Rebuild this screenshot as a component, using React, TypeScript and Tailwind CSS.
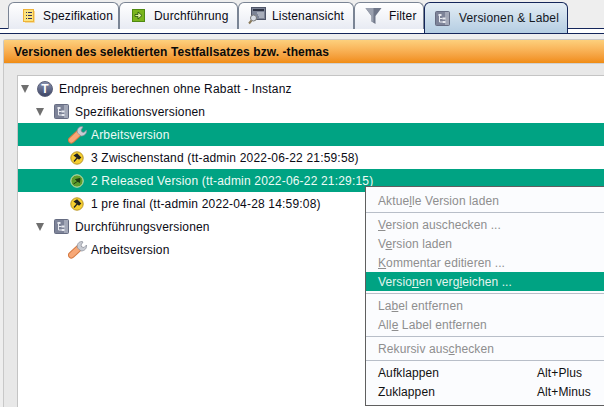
import React from "react";

const SpecIcon = () => (
  <svg width="14" height="14" viewBox="0 0 14 14">
    <rect x="1.500" y="0.500" width="10" height="12" fill="#fce47e" stroke="#eeb238" />
    <path d="M12.500 2v11.500H3" stroke="#f3d9a0" fill="none" />
    <path d="M4 3.500h1M6 3.500h4M4 6.500h1M6 6.500h4M4 9.500h1M6 9.500h4" stroke="#34345e" />
  </svg>
);

const ExecIcon = () => (
  <svg width="14" height="14" viewBox="0 0 14 14">
    <rect x="0.500" y="0.500" width="12" height="12" fill="#7ab51d" stroke="#4f8a10" />
    <path d="M3 5.500h3V3l4 3.500-4 3.500V7.500H3z" fill="#dff0a0" stroke="#23520a" strokeWidth="0.8" />
  </svg>
);

const ListIcon = () => (
  <svg width="18" height="18" viewBox="0 0 18 18">
    <rect x="3.500" y="0.500" width="14" height="12" fill="#7d8496" stroke="#4f5568" />
    <path d="M5 3h11" stroke="#2f3445" strokeWidth="2" />
    <path d="M9 6h7M10 8h6M11 10h5" stroke="#d5d8e0" />
    <circle cx="5.500" cy="11" r="3" fill="#d8dde6" stroke="#777" />
    <path d="M3.500 13.500L1 16.500" stroke="#8a7a5a" strokeWidth="2" />
  </svg>
);

const FilterIcon = () => (
  <svg width="18" height="18" viewBox="0 0 18 18">
    <path d="M0.500 1h16L10.500 9v8l-4-2.500V9z" fill="#6f7688" />
    <path d="M0.500 1h8v14L6.500 14.500V9z" fill="#9aa0ae" />
  </svg>
);

const TreeBoxIcon = () => (
  <svg width="15" height="15" viewBox="0 0 15 15">
    <rect x="0.500" y="0.500" width="14" height="14" rx="1" fill="#7d8398" stroke="#666c82" />
    <rect x="10" y="1" width="4" height="13" fill="#a3a8b8" />
    <path d="M3.500 3h3v2h-3zM7.500 6.500h3v2h-3zM7.500 10h3v2h-3z" fill="#e8eaf0" />
    <path d="M4.500 5v6h3M4.500 7.500h3" stroke="#e8eaf0" fill="none" />
  </svg>
);

const WrenchIcon = () => (
  <svg width="20" height="19" viewBox="0 0 20 19">
    <path d="M3.500 15L10.500 8.500" stroke="#d57a42" strokeWidth="7" strokeLinecap="round" />
    <path d="M3.500 15L10.500 8.500" stroke="#f7a877" strokeWidth="5" strokeLinecap="round" />
    <path d="M9.500 8C8.500 4.500 10.500 1.500 14 1.500l1 .5-2 3 .8 2 2.200.5 2.500-2.500c.5 3.500-2 6-5.500 6z" fill="#c9ccd3" stroke="#868b96" strokeWidth="0.7" />
  </svg>
);

const VersionIcon = ({ released }: { released?: boolean }) => (
  <svg width="14" height="14" viewBox="0 0 14 14">
    <circle cx="7" cy="7" r="6.200" fill={released ? "#5d9c2c" : "#f6cf30"} stroke={released ? "#cfe6b8" : "#b8962a"} />
    {released ? (
      <path d="M3.500 10L8 7M5.500 5.500L10 4.500 9.500 8.500z" fill="#1c3a10" stroke="#1c3a10" />
    ) : (
      <path d="M4 10.500L7.500 6.500M4.500 4.500L7 3l3.500 3.500L9 8z" fill="#222" stroke="#222" strokeWidth="1.200" />
    )}
  </svg>
);

const TopicIcon = () => (
  <div className="w-[16px] h-[16px] rounded-full bg-gradient-to-b from-[#8890ae] to-[#3e4666] border border-[#5a6078] flex items-center justify-center text-white text-[12px] font-bold">
    T
  </div>
);

const Caret = () => (
  <span className="w-0 h-0 border-l-[4px] border-r-[4px] border-t-[8px] border-l-transparent border-r-transparent border-t-[#6f6f6f]" />
);

const tabs = [
  { label: "Spezifikation", icon: <SpecIcon />, w: "w-[111px]", gap: "pl-[13px] gap-[7px]" },
  { label: "Durchführung", icon: <ExecIcon />, w: "w-[119px]", gap: "pl-[12px] gap-[8px]" },
  { label: "Listenansicht", icon: <ListIcon />, w: "w-[116px]", gap: "pl-[9px] gap-[6px]" },
  { label: "Filter", icon: <FilterIcon />, w: "w-[70px]", gap: "pl-[10px] gap-[6px]" },
];

const Row = ({
  indent,
  selected,
  children,
}: {
  indent: string;
  selected?: boolean;
  children: React.ReactNode;
}) => (
  <div
    className={`h-[23px] flex items-center tracking-[0.18px] ${indent} ${
      selected ? "bg-[#00a383] text-[#eefbf6]" : "text-[#0a0a14]"
    }`}
  >
    {children}
  </div>
);

const MenuRow = ({
  label,
  right,
  active,
  enabled,
}: {
  label: React.ReactNode;
  right?: string;
  active?: boolean;
  enabled?: boolean;
}) => (
  <div
    className={`h-[19px] flex items-center justify-between pl-[12px] pr-[6px] tracking-[0.1px] ${
      active ? "bg-[#00a383] text-[#e4f5ef]" : enabled ? "text-[#111]" : "text-[#8e8e8e]"
    }`}
  >
    <span>{label}</span>
    {right && <span className="w-[61px]">{right}</span>}
  </div>
);

const Sep = () => <div className="h-[5px] flex items-center"><div className="h-px w-full bg-[#b8bec8]" /></div>;

export default function App() {
  return (
    <div className="relative w-[604px] h-[407px] overflow-hidden bg-[#eeeeee] font-['Liberation_Sans',sans-serif] text-[12px]">
      {/* tabs */}
      <div className="h-[29px] pt-[2px] pl-[8px] flex border-b border-[#14265a] tracking-[0.15px]">
        {tabs.map((t) => (
          <div
            key={t.label}
            className={`${t.w} ${t.gap} h-[27px] flex items-center rounded-t-[6px] border border-b-0 border-[#7a8494] bg-gradient-to-b from-white to-[#e8ebf3] text-[#0a0a14]`}
          >
            {t.icon}
            <span>{t.label}</span>
          </div>
        ))}
        <div className="w-[144px] h-[31px] pl-[10px] gap-[9px] flex items-center rounded-t-[6px] border border-b-0 border-[#14265a] bg-gradient-to-b from-[#e4edf5] to-[#b4cde2] text-[#14181f] relative z-10">
          <TreeBoxIcon />
          <span>Versionen &amp; Label</span>
        </div>
      </div>
      <div className="h-[4px] bg-white" />
      <div className="h-px bg-[#14265a]" />

      {/* panel */}
      <div className="mt-[5px] ml-[3px] h-[370px] bg-[#e8e8e8] border-t border-l border-[#c8c8c8] rounded-tl-[3px] flex flex-col">
        <div className="h-[24px] shrink-0 pl-[10px] flex items-center font-bold tracking-[0.08px] text-[#0a0a0a] bg-gradient-to-b from-[#fdd07c] to-[#f08c10] border-b border-[#d0d0d0]">
          Versionen des selektierten Testfallsatzes bzw. -themas
        </div>
        <div className="flex-1 pt-[11px] pl-[13px]">
          <div className="h-full bg-white border-t border-l border-[#c4c4c4] pt-px">
            <Row indent="pl-[3px]">
              <Caret />
              <span className="ml-[8px]"><TopicIcon /></span>
              <span className="ml-[6px]">Endpreis berechnen ohne Rabatt - Instanz</span>
            </Row>
            <Row indent="pl-[18px]">
              <Caret />
              <span className="ml-[10px]"><TreeBoxIcon /></span>
              <span className="ml-[6px]">Spezifikationsversionen</span>
            </Row>
            <Row indent="pl-[50px]" selected>
              <WrenchIcon />
              <span className="ml-[3px]">Arbeitsversion</span>
            </Row>
            <Row indent="pl-[52px]">
              <VersionIcon />
              <span className="ml-[7px]">3 Zwischenstand (tt-admin 2022-06-22 21:59:58)</span>
            </Row>
            <Row indent="pl-[52px]" selected>
              <VersionIcon released />
              <span className="ml-[7px]">2 Released Version (tt-admin 2022-06-22 21:29:15)</span>
            </Row>
            <Row indent="pl-[52px]">
              <VersionIcon />
              <span className="ml-[7px]">1 pre final (tt-admin 2022-04-28 14:59:08)</span>
            </Row>
            <Row indent="pl-[18px]">
              <Caret />
              <span className="ml-[10px]"><TreeBoxIcon /></span>
              <span className="ml-[6px]">Durchführungsversionen</span>
            </Row>
            <Row indent="pl-[50px]">
              <WrenchIcon />
              <span className="ml-[3px]">Arbeitsversion</span>
            </Row>
          </div>
        </div>
      </div>

      {/* context menu */}
      <div className="absolute left-[365px] top-[186px] w-[239px] h-[220px] bg-[#fbfcfe] border-t border-l border-b border-[#5f5f5f] py-[4px]">
        <MenuRow label={<>Aktue<u>l</u>le Version laden</>} />
        <Sep />
        <MenuRow label={<><u>V</u>ersion auschecken ...</>} />
        <MenuRow label={<>V<u>e</u>rsion laden</>} />
        <MenuRow label={<><u>K</u>ommentar editieren ...</>} />
        <MenuRow active label={<>Versio<u>n</u>en verg<u>l</u>eichen ...</>} />
        <Sep />
        <MenuRow label={<>La<u>b</u>el entfernen</>} />
        <MenuRow label={<>All<u>e</u> Label entfernen</>} />
        <Sep />
        <MenuRow label={<>Rekursiv aus<u>c</u>hecken</>} />
        <Sep />
        <MenuRow enabled label="Aufklappen" right="Alt+Plus" />
        <MenuRow enabled label="Zuklappen" right="Alt+Minus" />
      </div>
    </div>
  );
}
